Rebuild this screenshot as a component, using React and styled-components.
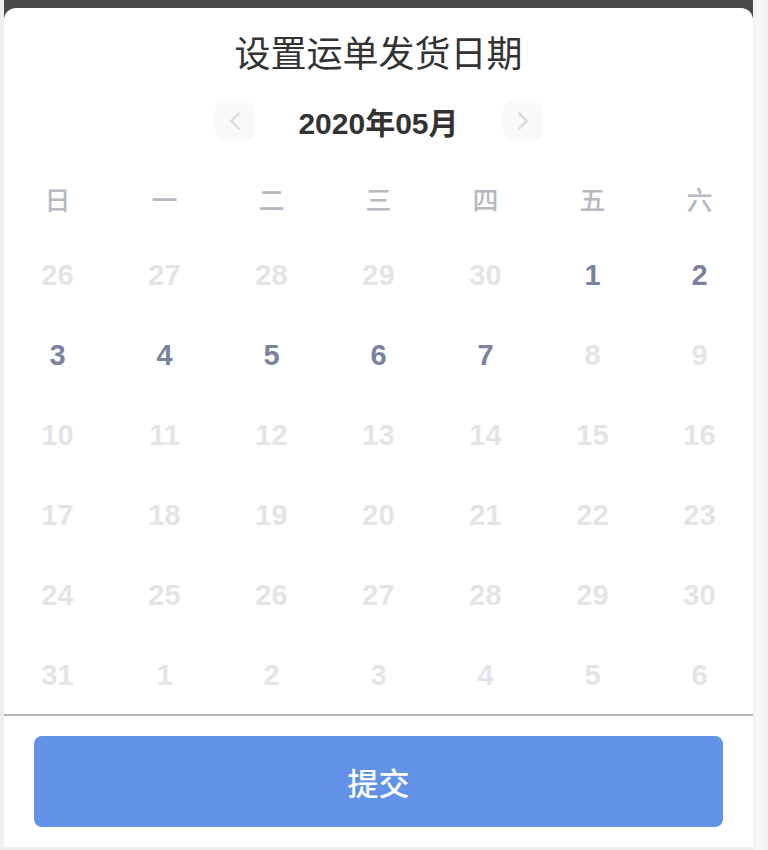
import React from 'react';
import styled, { createGlobalStyle } from 'styled-components';
import { ChevronLeft, ChevronRight } from 'lucide-react';

const GlobalStyle = createGlobalStyle`
  html, body {
    margin: 0;
    padding: 0;
    background: #f0f0f0;
  }
  * {
    box-sizing: border-box;
  }
`;

const Frame = styled.div`
  width: 768px;
  height: 850px;
  display: flex;
  padding-left: 4px;
  background: #eeeeee;
  overflow: hidden;
`;

const Viewport = styled.div`
  width: 749px;
  height: 847px;
  display: flex;
  flex-direction: column;
  padding-top: 8px;
  background: #4a4a4a;
`;

const Scrollbar = styled.div`
  flex: 1;
  background: linear-gradient(to right, #f3f3f3, #f8f8f8 40%, #f1f1f1);
`;

const Sheet = styled.div`
  flex: 1;
  display: flex;
  flex-direction: column;
  background: #ffffff;
  border-radius: 12px 12px 0 0;
  font-family: "Noto Sans CJK SC", "Noto Sans", sans-serif;
  overflow: hidden;
`;

const Title = styled.h1`
  margin: 0;
  height: 88px;
  line-height: 86px;
  text-align: center;
  font-size: 36px;
  font-weight: 400;
  color: #333333;
`;

const MonthNav = styled.div`
  height: 52px;
  display: flex;
  align-items: center;
  justify-content: center;
  gap: 38px;
`;

const NavButton = styled.button`
  width: 40px;
  height: 40px;
  border: none;
  border-radius: 10px;
  background: #f8f9fb;
  color: #dcdee2;
  display: flex;
  align-items: center;
  justify-content: center;
  padding: 0;
`;

const MonthLabel = styled.div`
  width: 172px;
  text-align: center;
  font-family: "Liberation Sans", "Noto Sans CJK SC", sans-serif;
  font-weight: 700;
  font-size: 30px;
  color: #333333;
`;

const Calendar = styled.div`
  flex: 1;
  display: flex;
  flex-direction: column;
`;

const Week = styled.div`
  display: grid;
  grid-template-columns: repeat(7, 1fr);
`;

const WeekdayRow = styled(Week)`
  padding-top: 16px;
`;

const Weekday = styled.div`
  height: 71px;
  line-height: 71px;
  text-align: center;
  font-size: 26px;
  font-weight: 500;
  color: #b6bac3;
`;

const Day = styled.div`
  height: 80px;
  display: flex;
  align-items: center;
  justify-content: center;
  padding-top: 3px;
  font-family: "Liberation Sans", Arial, sans-serif;
  font-size: 29px;
  font-weight: 700;
  color: ${(p) => (p.$active ? '#7a829f' : '#e3e4e8')};
`;

const Footer = styled.div`
  border-top: 2px solid #b7b7b7;
  padding: 20px 30px 20px 30px;
`;

const Submit = styled.button`
  width: 100%;
  height: 91px;
  border: none;
  border-radius: 8px;
  background: #6192e7;
  color: #ffffff;
  font-family: "Noto Sans CJK SC", "Noto Sans", sans-serif;
  font-size: 31px;
  font-weight: 500;
`;

const weekdays = ['日', '一', '二', '三', '四', '五', '六'];

const weeks = [
  [26, 27, 28, 29, 30, 1, 2],
  [3, 4, 5, 6, 7, 8, 9],
  [10, 11, 12, 13, 14, 15, 16],
  [17, 18, 19, 20, 21, 22, 23],
  [24, 25, 26, 27, 28, 29, 30],
  [31, 1, 2, 3, 4, 5, 6],
];

// selectable range: May 1 – May 7
const isActive = (w, d) => (w === 0 && d >= 5) || (w === 1 && d <= 4);

const App = () => {
  return (
    <>
      <GlobalStyle />
      <Frame>
        <Viewport>
          <Sheet>
            <Title>设置运单发货日期</Title>
            <MonthNav>
              <NavButton>
                <ChevronLeft size={30} strokeWidth={2} />
              </NavButton>
              <MonthLabel>2020年05月</MonthLabel>
              <NavButton>
                <ChevronRight size={30} strokeWidth={2} />
              </NavButton>
            </MonthNav>
            <Calendar>
              <WeekdayRow>
                {weekdays.map((w) => (
                  <Weekday key={w}>{w}</Weekday>
                ))}
              </WeekdayRow>
              {weeks.map((week, wi) => (
                <Week key={wi}>
                  {week.map((d, di) => (
                    <Day key={di} $active={isActive(wi, di)}>
                      {d}
                    </Day>
                  ))}
                </Week>
              ))}
            </Calendar>
            <Footer>
              <Submit>提交</Submit>
            </Footer>
          </Sheet>
        </Viewport>
        <Scrollbar />
      </Frame>
    </>
  );
};

export default App;
